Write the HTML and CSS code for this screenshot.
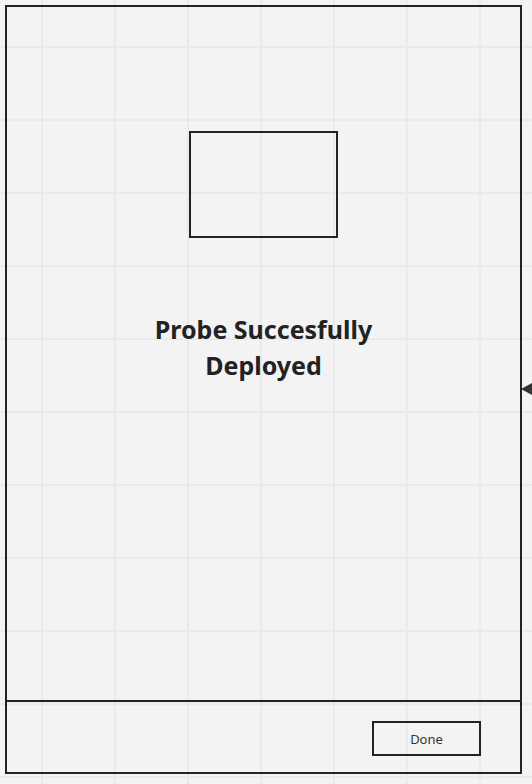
FILE: index.html
```html
<!DOCTYPE html>
<html lang="en">
  <head>
    <meta charset="UTF-8" />
    <meta name="viewport" content="width=device-width, initial-scale=1.0" />
    <title>Probe Deployed</title>
    <link rel="stylesheet" href="styles.css">
  </head>
  <body>
    <div class="device">
      <div class="content">
        <div class="image-box"></div>
        <h1 class="message">Probe Succesfully<br>Deployed</h1>
      </div>
      <div class="footer">
        <button class="button">Done</button>
      </div>
    </div>
    <div class="arrow"></div>
  </body>
</html>
```

FILE: styles.css
```css
body {
  margin: 0;
  height: 784px;
  overflow: hidden;
  font-family: "Noto Sans", "Open Sans", sans-serif;
  background-color: #f3f3f3;
  background-image:
    linear-gradient(90deg, #eaeaea 2px, transparent 2px),
    linear-gradient(180deg, #eaeaea 2px, transparent 2px);
  background-size: 73px 73px;
  background-position: 41px 46px;
}

.device {
  box-sizing: border-box;
  margin: 5px 0 0 5px;
  width: 517px;
  height: 769px;
  border: 2px solid #222;
  display: flex;
  flex-direction: column;
}

.content {
  height: 693px;
  border-bottom: 2px solid #222;
  display: flex;
  flex-direction: column;
  align-items: center;
}

.image-box {
  box-sizing: border-box;
  margin-top: 124px;
  width: 149px;
  height: 107px;
  border: 2px solid #222;
}

.message {
  margin: 73px 0 0;
  font-size: 25px;
  line-height: 36px;
  font-weight: 700;
  color: #222;
  text-align: center;
}

.footer {
  flex: 1;
  display: flex;
  justify-content: flex-end;
  align-items: flex-start;
  padding: 19px 39px 0 0;
}

.button {
  box-sizing: border-box;
  width: 109px;
  height: 35px;
  border: 2px solid #222;
  background: transparent;
  font-family: "Noto Sans", "Open Sans", sans-serif;
  font-size: 13px;
  color: #333;
  padding: 0;
}

.arrow {
  position: absolute;
  left: 521px;
  top: 383px;
  width: 0;
  height: 0;
  border-top: 6px solid transparent;
  border-bottom: 6px solid transparent;
  border-right: 11px solid #333;
}
```
